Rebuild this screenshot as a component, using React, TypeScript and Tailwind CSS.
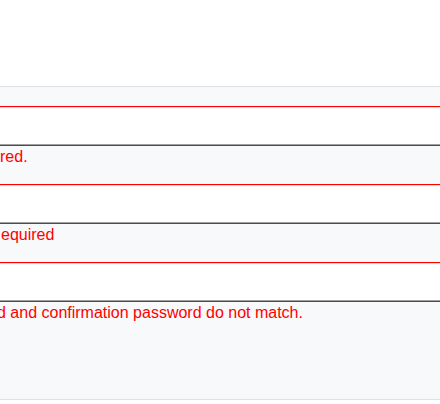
export default function App() {
  return (
    <div className="w-[440px] h-[404px] bg-white overflow-hidden font-['Liberation_Sans',Arial,sans-serif] text-[16px] leading-[18px] text-[#ff0000]">
      <div className="h-[86px]" />
      <div className="h-px bg-[#dee2e6]" />
      <div className="h-[19px] bg-[#f8f9fa]" />
      <div className="h-px bg-[#ff0000]" />
      <div className="h-[38px] bg-white border-t border-b border-t-[#e0e0e0] border-b-[#a0a0a0]" />
      <div className="h-px bg-[#ff0000]" />
      <div className="h-[38px] bg-[#f8f9fa] pt-[2px] whitespace-nowrap">
        <span className="block">red.</span>
      </div>
      <div className="h-px bg-[#ff0000]" />
      <div className="h-[38px] bg-white border-t border-b border-t-[#e0e0e0] border-b-[#a0a0a0]" />
      <div className="h-px bg-[#ff0000]" />
      <div className="h-[38px] bg-[#f8f9fa] pt-[2px] whitespace-nowrap">
        <span className="block ml-[1px]">equired</span>
      </div>
      <div className="h-px bg-[#ff0000]" />
      <div className="h-[38px] bg-white border-t border-b border-t-[#e0e0e0] border-b-[#a0a0a0]" />
      <div className="h-px bg-[#ff0000]" />
      <div className="h-[97px] bg-[#f8f9fa] pt-[2px] whitespace-nowrap">
        <span className="block ml-[-3px]">d and confirmation password do not match.</span>
      </div>
      <div className="h-px bg-[#dee2e6]" />
    </div>
  );
}
